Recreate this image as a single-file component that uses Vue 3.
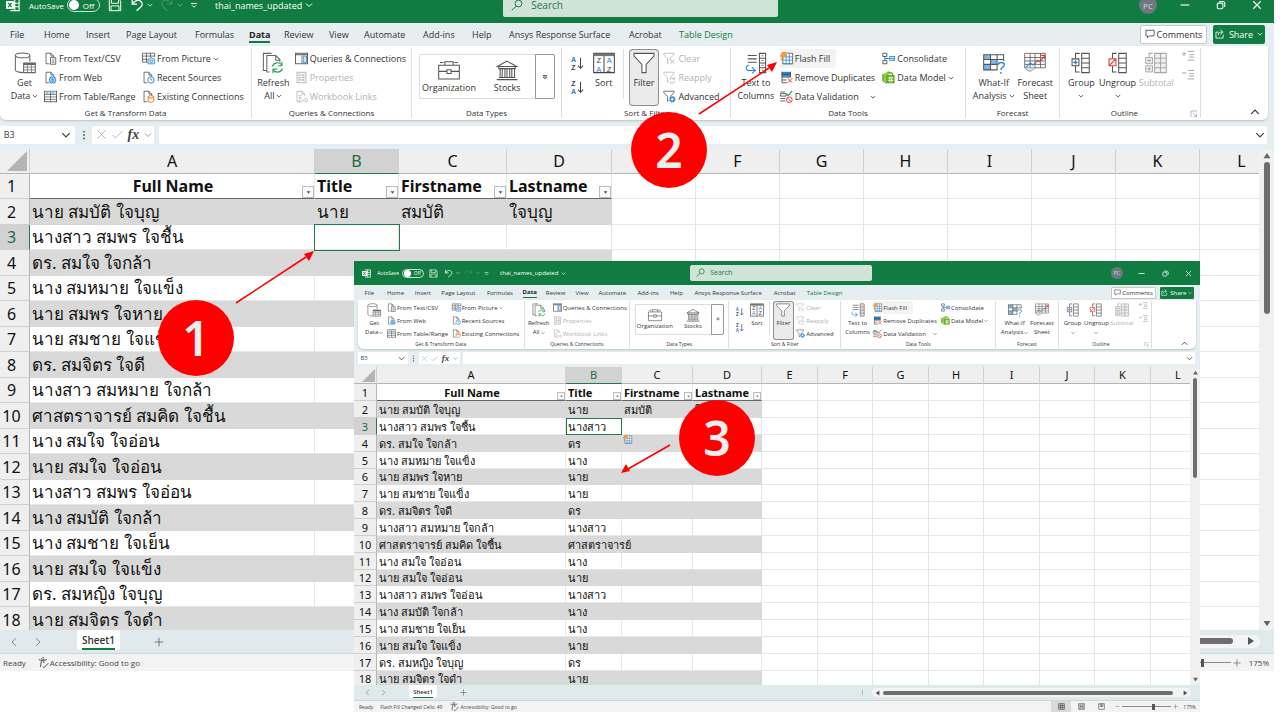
<script setup>
import { h } from 'vue'

const doc = (c = '#555') =>
  `<path d="M6.5 14.5H2.5V1.5h6l3.500 3.500V7M8.500 1.500V5h3.500" fill="none" stroke="${c}"/>`
const funnel = (c) =>
  `<path d="M1 1.500h12.500v1.500L9 8v2M1 1.500V3l4.500 5v6l1.500-1" fill="none" stroke="${c}"/>`

const glyphs = {
  excel: [16, `<path d="M5 1.500h10v13H5M10 1.500v13M5 6h10M5 10h10" fill="none" stroke="#fff" stroke-width="1.300"/><rect y="3.500" width="9" height="9" fill="#fff"/><path d="M2.500 5.500l4 5M6.500 5.500l-4 5" stroke="#107c41" stroke-width="1.500"/>`],
  save: [16, `<path d="M1.500 1.500h11l2 2v11h-13zM4 1.500V6h8V1.500M3.500 14.500V9h9v5.500" fill="none" stroke="#fff" stroke-width="1.100"/>`],
  undo: [16, `<path d="M2.500 1.500V7H8M3 6.500C6 2 11 1.500 13 4.500s1 5-5.500 10" fill="none" stroke="#fff" stroke-width="1.400"/>`],
  redo: [16, `<path d="M13.500 1.500V7H8M13 6.500C10 2 5 1.500 3 4.500s-1 5 5.500 10" fill="none" stroke="#5fa67d" stroke-width="1.400"/>`],
  more: [16, `<path d="M2 5h12" stroke="#fff" stroke-width="1.800"/><path d="M4 8.500l4 4 4-4" fill="none" stroke="#fff" stroke-width="1.800"/>`],
  chevron: [16, `<path d="M2 5l6 6 6-6" fill="none" stroke="currentColor" stroke-width="2"/>`],
  up: [16, `<path d="M2 11l6-6 6 6" fill="none" stroke="currentColor" stroke-width="1.900"/>`],
  left: [16, `<path d="M11 2L5 8l6 6" fill="none" stroke="currentColor" stroke-width="1.500"/>`],
  right: [16, `<path d="M5 2l6 6-6 6" fill="none" stroke="currentColor" stroke-width="1.500"/>`],
  search: [16, `<circle cx="10" cy="6" r="4.500" fill="none" stroke="#22774a" stroke-width="1.300"/><path d="M7 9.500L1 15" stroke="#22774a" stroke-width="1.300"/>`],
  minimise: [16, `<path d="M1 8h14" stroke="#fff" stroke-width="1.800"/>`],
  restore: [16, `<rect x="2" y="5" width="9" height="9" rx="2" fill="none" stroke="#fff" stroke-width="1.700"/><path d="M5 2.500h6a3 3 0 0 1 3 3V11" fill="none" stroke="#fff" stroke-width="1.700"/>`],
  close: [16, `<path d="M2 2l12 12M14 2L2 14" stroke="#fff" stroke-width="1.700"/>`],
  comment: [16, `<path d="M1.500 2h13v9H7l-3 3v-3H1.500z" fill="none" stroke="#333" stroke-width="1.200"/>`],
  share: [16, `<path d="M6 5H1.500v9.500H13V9M5 10c0-4 3-5 6-5M8.500 1.500L13 5 8.500 8.500" fill="none" stroke="#fff" stroke-width="1.300"/>`],
  cross: [16, `<path d="M2 2l12 12M14 2L2 14" stroke="#aaa" stroke-width="1.200"/>`],
  tick: [16, `<path d="M1 9l4 4L15 3" fill="none" stroke="#aaa" stroke-width="1.300"/>`],
  dots: [16, `<circle cx="8" cy="2.500" r="1.500" fill="#555"/><circle cx="8" cy="8" r="1.500" fill="#555"/><circle cx="8" cy="13.500" r="1.500" fill="#555"/>`],
  plus: [16, `<path d="M8 1v14M1 8h14" stroke="#666" stroke-width="1.400"/>`],
  minus: [16, `<path d="M2 8h12" stroke="#666" stroke-width="1.500"/>`],
  access: [16, `<circle cx="7" cy="2.500" r="1.700" fill="none" stroke="#444"/><path d="M1 3.500c4 2 8 2 12 0M5 5.500l-1.500 9M8.500 5.500V9M7 14l2 1.500L15 9" fill="none" stroke="#444" stroke-width="1.300"/>`],
  normal: [16, `<path d="M1.500 1.500h13v13h-13zM1.500 6h13M1.500 10h13M6 1.500v13M10 1.500v13" fill="none" stroke="#444" stroke-width="1.400"/>`],
  page: [16, `<path d="M1.500 1.500h13v13h-13zM4.500 2v12M11.500 2v12M5 5h6M5 8h6M5 11h6" fill="none" stroke="#444" stroke-width="1.300"/>`],
  breaks: [16, `<path d="M1.500 1.500h13v13h-13zM5 1.500V8h6V1.500M8 1.500V8" fill="none" stroke="#444" stroke-width="1.300"/>`],
  csv: [16, doc() + `<rect x="8" y="7" width="6.500" height="8" fill="#fff" stroke="#555"/><path d="M9.500 9.500h3.500M9.500 11.300h3.500M9.500 13h3.500" stroke="#555" stroke-width=".7"/>`],
  web: [16, doc() + `<circle cx="10.500" cy="11" r="4.500" fill="#2b88d8"/><path d="M6.500 9.700h8M6.500 12.300h8M10.500 6.500c-3 3-3 6 0 9c3-3 3-6 0-9" fill="none" stroke="#fff" stroke-width=".7"/>`],
  table: [16, `<rect x=".5" y="1.500" width="15" height="13" fill="#fff" stroke="#444"/><rect x="1" y="2" width="14" height="3" fill="#cde6f7"/><path d="M3 3.500h2M10 3.500h2" stroke="#2b88d8"/><path d="M1 5.500h14M1 8.500h14M1 11.500h14M8 2v12" stroke="#444" stroke-width=".8"/>`],
  picture: [16, `<path d="M7 12.500H.5v-11h15V6M.500 5h15M.500 9H7M5.500 1.500v11M10.500 1.500V6" fill="none" stroke="#555"/><path d="M7.500 8.500h2l1-1.500h2l1 1.500h2v6h-8z" fill="#e6f3fc" stroke="#2b88d8"/><circle cx="11.500" cy="11.300" r="1.700" fill="none" stroke="#2b88d8"/>`],
  recent: [16, doc() + `<circle cx="11" cy="11" r="4" fill="#fff" stroke="#2b88d8" stroke-width="1.200"/><path d="M11 8.500V11h2" fill="none" stroke="#2b88d8"/>`],
  existing: [16, doc() + `<path d="M7.500 8.500v5c0 2 7 2 7 0v-5" fill="#fff" stroke="#e8761a" stroke-width="1.200"/><ellipse cx="11" cy="8.500" rx="3.500" ry="1.500" fill="#fff" stroke="#e8761a" stroke-width="1.200"/>`],
  queries: [16, `<rect x=".5" y="1.500" width="15" height="13" fill="#fff" stroke="#444"/><path d="M1 3h14" stroke="#777" stroke-width="2"/><rect x="10" y="5" width="4" height="8" fill="#cde6f7" stroke="#2b88d8"/><path d="M8.500 4v10" stroke="#777"/>`],
  properties: [16, `<rect x="2.500" y="1.500" width="11" height="13" fill="#f3f3f3" stroke="#b0b0b0"/><path d="M4.500 5h2.500M4.500 8h2.500M4.500 11h2.500M8.500 5h3M8.500 8h3M8.500 11h3" stroke="#b0b0b0" stroke-width="1.500"/>`],
  links: [16, doc('#b5b5b5') + `<path d="M8 10.500H7a2 2 0 0 0 0 4h2M12 10.500h1.500a2 2 0 0 1 0 4H12M8 12.500h5M4.500 7h4M4.500 9h3" fill="none" stroke="#b5b5b5"/>`],
  clear: [16, funnel('#b5b5b5') + `<path d="M9 9.500l5 5M14 9.500l-5 5" stroke="#b5b5b5" stroke-width="1.100"/>`],
  reapply: [16, funnel('#b5b5b5') + `<path d="M8.500 11a3 3 0 0 1 5.500-1V8M14 10h-2.500M14.500 12a3 3 0 0 1-5.500 1.500v2" fill="none" stroke="#b5b5b5"/>`],
  advanced: [16, funnel('#555') + `<circle cx="11.500" cy="11.500" r="3" fill="#fff" stroke="#2b88d8" stroke-width="2" stroke-dasharray="1.600 .700"/><circle cx="11.500" cy="11.500" r="2.200" fill="none" stroke="#2b88d8" stroke-width="1.300"/>`],
  flash: [16, `<path d="M3.500 8v6.500h12v-13H8" fill="#fff" stroke="#555"/><path d="M7.500 3v11.500M11.500 2v12.500M7 6h8M4 10h11" stroke="#2b88d8"/><path d="M3.500 14.500h12" stroke="#2b88d8"/><path d="M3 .5h5L5.500 4H8L1.500 10 3 5.500H.5z" fill="#f7a23b" stroke="#d9730d" stroke-width=".7"/>`],
  duplicates: [16, `<rect x="2" y="1" width="11" height="6" fill="#2b88d8"/><path d="M2.500 1v13.500h6M13 1v7M2.500 7.500H13M2.500 11H8M3 4h10" fill="none" stroke="#444"/><path d="M9.500 9l5.500 5.500M15 9l-5.500 5.500" stroke="#e03c3c" stroke-width="1.200"/>`],
  validation: [16, `<path d="M.5 2.500h6M.5 13.500h6M.5 7.500h7v-3H.500zM.500 10.500h6" fill="none" stroke="#444"/><path d="M8 4.500l2 2.500 5-6" fill="none" stroke="#1f9d55" stroke-width="1.300"/><circle cx="11.500" cy="12" r="3.500" fill="#fff" stroke="#e03c3c" stroke-width="1.200"/><path d="M9.500 10l4 4" stroke="#e03c3c"/>`],
  consolidate: [16, `<path d="M1 1.500h5v4H1zM1 10.500h5v4H1z" fill="none" stroke="#444"/><path d="M3.500 5.500v5M3.500 8H9" stroke="#2b88d8" stroke-width="1.300"/><rect x="9.500" y="5.500" width="6" height="5" fill="#cde6f7" stroke="#2b88d8"/><path d="M10 8h5" stroke="#2b88d8"/>`],
  model: [16, `<path d="M1 4l6-3 5 1.500L7 5v9l-6-3z" fill="#8ccf3c"/><path d="M7 1l6 2v5M1 4v8l5 3" fill="none" stroke="#5aa716" stroke-width="1.300"/><rect x="5.500" y="5" width="10" height="10" rx="1" fill="#5aa716"/><path d="M7 8.500h7M7 11.500h7M9.500 6.500V14M12 6.500V14" stroke="#fff"/>`],
  getdata: [32, `<path d="M2 5v21c0 2 5 4 11 4M23 5v9" fill="none" stroke="#666" stroke-width="1.500"/><ellipse cx="12.500" cy="5" rx="10.500" ry="3.500" fill="#fff" stroke="#666" stroke-width="1.500"/><path d="M14 16h17v14H14z" fill="#fff" stroke="#666" stroke-width="1.500"/><path d="M14 17.500h17" stroke="#666" stroke-width="3"/><path d="M14 22h17M14 26h17M19.500 17v13M25.500 17v13" stroke="#777" stroke-width="1.200"/>`],
  refresh: [32, `<path d="M7 27H2V2h12M11 29H7V5h13l6 6v4M20 5v7h6" fill="none" stroke="#666" stroke-width="1.500"/><path d="M15 21a8 8 0 0 1 14-2M29 14v6h-6M30 24a8 8 0 0 1-14 2M16 31v-6h6" fill="none" stroke="#2ea35b" stroke-width="1.700"/>`],
  organization: [32, `<path d="M1 9h30v20H1zM10 9V4h12v5M1 18h12M19 18h12M13 15.500h6V21h-6zM3 5h5M24 5h5" fill="none" stroke="#555" stroke-width="1.500"/>`],
  stocks: [32, `<path d="M16 3L2 11h28zM4 11v3h24v-3M4 27h24M1 30h30M6 14v12M9 14v12M13 14v12M16 14v12M20 14v12M23 14v12M27 14v12" fill="none" stroke="#555" stroke-width="1.500"/>`],
  sort: [32, `<path d="M1 2h30v28H1z" fill="#fff" stroke="#444" stroke-width="1.500"/><path d="M1 4h30" stroke="#777" stroke-width="4"/><path d="M16 6v24" stroke="#444" stroke-width="1.500"/><g font-size="11" text-anchor="middle" fill="#333"><text x="8.500" y="16.500">Z</text><text x="8.500" y="28.500" fill="#2b7cd3">A</text><text x="23.500" y="16.500" fill="#2b7cd3">A</text><text x="23.500" y="28.500">Z</text></g>`],
  az: [16, `<g font-size="8" font-weight="600" text-anchor="middle"><text x="4" y="7" fill="#2b7cd3">A</text><text x="4" y="15.500" fill="#444">Z</text></g><path d="M12 2v12M9 11l3 3 3-3" fill="none" stroke="#444" stroke-width="1.200"/>`],
  za: [16, `<g font-size="8" font-weight="600" text-anchor="middle"><text x="4" y="7" fill="#444">Z</text><text x="4" y="15.500" fill="#2b7cd3">A</text></g><path d="M12 2v12M9 11l3 3 3-3" fill="none" stroke="#444" stroke-width="1.200"/>`],
  filter: [32, `<path d="M1.500 2h29v4L19 18v12h-6V18L1.500 6z" fill="#fff" stroke="#555" stroke-width="1.500"/>`],
  textcols: [32, `<path d="M4 5h13M4 10h13M4 15h13" stroke="#555" stroke-width="1.500"/><path d="M21 2h9v28h-9zM21 9h9M21 16h9M21 23h9" fill="none" stroke="#555" stroke-width="1.500"/><path d="M24 5.500h3M24 12.500h3M24 19.500h3M24 26.500h3" stroke="#777" stroke-width="1.300"/><path d="M5 19c-5 3-4 9 3 8h6M10 22l5 5-5 4" fill="none" stroke="#2b88d8" stroke-width="1.600"/>`],
  whatif: [32, `<path d="M1 4h29v22H1z" fill="#fff"/><path d="M1 4h10v7H1zM11 11h9v7h-9zM1 18h10v8H1z" fill="#79b8ea"/><path d="M21 26H1V4h29v9M1 11h29M1 18h20M11 4v22M20.500 4v22" fill="none" stroke="#555" stroke-width="1.500"/><path d="M22 19c0-5 9-5 9 0 0 3-5 3-5 7M26 29v2.500" fill="none" stroke="#2b88d8" stroke-width="2"/>`],
  forecast: [32, `<path d="M1 2h30v21H1zM1 8h30M1 13h30M1 18h30M9 2v21M16 2v21M24 2v21" fill="none" stroke="#666" stroke-width="1.300"/><path d="M1 23c7 8 10 5 15 0" fill="#ddd" stroke="#777"/><path d="M3 22l6-6 4 3 4-3" fill="none" stroke="#2b88d8" stroke-width="1.800"/><path d="M17 15l3-3 3 2 7-8M25 5h5v5" fill="none" stroke="#d83b3b" stroke-width="1.700"/>`],
  group: [32, `<path d="M17 2h11v28H17zM17 9h11M17 16h11M17 23h11M14 2H8v7M8 20v9h6" fill="none" stroke="#555" stroke-width="1.500"/><path d="M3 10h10v10H3z" fill="#fff" stroke="#555" stroke-width="1.500"/><path d="M8 12v6M5 15h6" stroke="#2b7cd3" stroke-width="2"/>`],
  ungroup: [32, `<path d="M17 2h11v28H17zM17 9h11M17 16h11M17 23h11M14 2H8v7M8 20v9h6" fill="none" stroke="#555" stroke-width="1.500"/><path d="M3 10h10v10H3zM3 20L13 10" fill="#fff" stroke="#e04848" stroke-width="1.700"/>`],
  subtotal: [32, `<path d="M14 2h17v28H14z" fill="#f0f0f0"/><path d="M14 2h17v28H14zM14 9h17M14 16h17M14 23h17M22.500 2v28M11 2H6v5" fill="none" stroke="#a8a8a8" stroke-width="1.500"/><path d="M1 8h10v9H1zM1 20h10v9H1zM3 12.500h6M6 10v5M3 24.500h6M6 22v5" fill="#eee" stroke="#a8a8a8" stroke-width="1.400"/>`],
  show: [16, `<path d="M0 6h5M2.500 3.500v5M7 3h8M9 7h6M9 10h6M7 13.500h8" stroke="#aaa" stroke-width="1.200"/>`],
  hide: [16, `<path d="M0 6h5M7 3h8M9 7h6M9 10h6M7 13.500h8" stroke="#aaa" stroke-width="1.200"/>`],
  launcher: [16, `<path d="M2 14V2h12M6 6l7 7M13 7v6.500H6.500" fill="none" stroke="#999" stroke-width="1.300"/>`],
}

const Icon = ({ name }) =>
  h('svg', {
    viewBox: `0 0 ${glyphs[name][0]} ${glyphs[name][0]}`,
    'aria-hidden': 'true',
    innerHTML: glyphs[name][1],
  })
Icon.props = ['name']

const tabs = ['File', 'Home', 'Insert', 'Page Layout', 'Formulas', 'Data', 'Review', 'View', 'Automate',
  'Add-ins', 'Help', 'Ansys Response Surface', 'Acrobat', 'Table Design']

const gap = { kind: 'gap' }
const large = (icon, lines, extra = {}) => ({ kind: 'large', icon, lines, ...extra })
const list = (...items) => ({ kind: 'list', items: items.map(([icon, text, flag]) => ({ icon, text, flag })) })

const groups = [
  { id: 'get', label: 'Get & Transform Data', blocks: [gap, large('getdata', ['Get', 'Data'], { caret: true }),
    list(['csv', 'From Text/CSV'], ['web', 'From Web'], ['table', 'From Table/Range']),
    list(['picture', 'From Picture', 'drop'], ['recent', 'Recent Sources'], ['existing', 'Existing Connections'])] },
  { id: 'queries', label: 'Queries & Connections', blocks: [large('refresh', ['Refresh', 'All'], { caret: true }),
    list(['queries', 'Queries & Connections'], ['properties', 'Properties', 'dim'], ['links', 'Workbook Links', 'dim'])] },
  { id: 'types', label: 'Data Types', blocks: [gap, { kind: 'gallery' }, gap] },
  { id: 'sort', label: 'Sort & Filter', blocks: [gap, { kind: 'order' }, large('sort', ['Sort']), { kind: 'rule' },
    large('filter', ['Filter'], { on: true }), gap,
    list(['clear', 'Clear', 'dim'], ['reapply', 'Reapply', 'dim'], ['advanced', 'Advanced'])] },
  { id: 'tools', label: 'Data Tools', blocks: [gap, large('textcols', ['Text to', 'Columns']), gap,
    list(['flash', 'Flash Fill', 'hover'], ['duplicates', 'Remove Duplicates'], ['validation', 'Data Validation', 'far']),
    list(['consolidate', 'Consolidate'], ['model', 'Data Model', 'drop'])] },
  { id: 'forecasts', label: 'Forecast', blocks: [gap, large('whatif', ['What-If', 'Analysis'], { caret: true }),
    large('forecast', ['Forecast', 'Sheet']), gap] },
  { id: 'outline', label: 'Outline', launcher: true, blocks: [gap, large('group', ['Group', ''], { caret: true }),
    large('ungroup', ['Ungroup', ''], { caret: true }), large('subtotal', ['Subtotal'], { dim: true }), { kind: 'levels' }] },
]

const letters = 'ABCDEFGHIJKL'.split('')
const heads = ['Full Name', 'Title', 'Firstname', 'Lastname']
const names = [
  'นาย สมบัติ ใจบุญ', 'นางสาว สมพร ใจชื้น', 'ดร. สมใจ ใจกล้า', 'นาง สมหมาย ใจแข็ง', 'นาย สมพร ใจหาย',
  'นาย สมชาย ใจแข็ง', 'ดร. สมจิตร ใจดี', 'นางสาว สมหมาย ใจกล้า', 'ศาสตราจารย์ สมคิด ใจชื้น', 'นาง สมใจ ใจอ่อน',
  'นาย สมใจ ใจอ่อน', 'นางสาว สมพร ใจอ่อน', 'นาง สมบัติ ใจกล้า', 'นาง สมชาย ใจเย็น', 'นาย สมใจ ใจแข็ง',
  'ดร. สมหญิง ใจบุญ', 'นาย สมจิตร ใจดำ',
]
const rowsFor = (filled) =>
  names.map((name, i) => {
    const [title, first, last] = name.split(' ')
    if (i === 0) return [name, title, first, last]
    return [name, filled ? title.replace('.', '') : '', '', '']
  })

const windows = [
  { id: 'main', rows: rowsFor(false), message: '' },
  { id: 'inset', rows: rowsFor(true), message: 'Flash Fill Changed Cells: 49' },
]
</script>

<template>
  <div class="page">
    <section v-for="w in windows" :key="w.id" class="window" :class="w.id" aria-label="thai_names_updated">
      <header class="titlebar">
        <Icon name="excel" class="mid-icon logo" />
        <span class="auto">AutoSave</span>
        <button class="toggle"><i></i>Off</button>
        <button aria-label="Save"><Icon name="save" class="mid-icon" /></button>
        <button class="pair" aria-label="Undo"><Icon name="undo" class="mid-icon" /><Icon name="chevron" class="caret" /></button>
        <button class="pair faded" aria-label="Redo"><Icon name="redo" class="mid-icon" /><Icon name="chevron" class="caret" /></button>
        <button aria-label="Customize toolbar"><Icon name="more" class="chev" /></button>
        <button class="pair file">thai_names_updated <Icon name="chevron" class="chev" /></button>
        <label class="search"><Icon name="search" class="mid-icon" /><input type="text" placeholder="Search" aria-label="Search" /></label>
        <span class="avatar">PC</span>
        <button aria-label="Minimize"><Icon name="minimise" class="sys" /></button>
        <button aria-label="Restore"><Icon name="restore" class="sys" /></button>
        <button aria-label="Close"><Icon name="close" class="sys" /></button>
      </header>

      <nav class="tabs">
        <button v-for="t in tabs" :key="t" :class="{ active: t === 'Data', design: t === 'Table Design' }"><span>{{ t }}</span></button>
        <button class="comments"><Icon name="comment" class="small-icon" />Comments</button>
        <button class="share"><Icon name="share" class="small-icon" />Share<Icon name="chevron" class="caret" /></button>
      </nav>

      <div class="ribbon">
        <div v-for="g in groups" :key="g.id" class="group" :class="g.id">
          <div class="tools-row">
            <template v-for="(b, i) in g.blocks" :key="i">
              <span v-if="b.kind === 'gap'"></span>
              <span v-else-if="b.kind === 'rule'" class="rule"></span>
              <button v-else-if="b.kind === 'large'" class="large" :class="{ on: b.on, dim: b.dim }">
                <Icon :name="b.icon" class="large-icon" />
                <span v-for="(l, n) in b.lines" :key="n" class="line">{{ l }}<Icon v-if="b.caret && n === 1" name="chevron" class="caret" /></span>
              </button>
              <div v-else-if="b.kind === 'list'" class="list">
                <button v-for="it in b.items" :key="it.text" :class="it.flag">
                  <Icon :name="it.icon" class="item-icon" />{{ it.text }}<Icon v-if="it.flag === 'drop' || it.flag === 'far'" name="chevron" class="caret" />
                </button>
              </div>
              <div v-else-if="b.kind === 'gallery'" class="gallery">
                <button><Icon name="organization" class="large-icon" />Organization</button>
                <button><Icon name="stocks" class="large-icon" />Stocks</button>
                <button class="expand" aria-label="More data types"><svg viewBox="0 0 16 16" class="caret"><path d="M2 4h12M3 8h10l-5 5z" fill="none" stroke="#333" stroke-width="2" /></svg></button>
              </div>
              <div v-else-if="b.kind === 'order'" class="order">
                <button aria-label="Sort A to Z"><Icon name="az" class="mid-icon" /></button>
                <button aria-label="Sort Z to A"><Icon name="za" class="mid-icon" /></button>
              </div>
              <div v-else class="levels">
                <button aria-label="Show detail"><Icon name="show" class="item-icon" /></button>
                <button aria-label="Hide detail"><Icon name="hide" class="item-icon" /></button>
              </div>
            </template>
          </div>
          <div class="caption">{{ g.label }}<button v-if="g.launcher" class="launcher" aria-label="Outline settings"><Icon name="launcher" class="chev" /></button></div>
        </div>
        <button class="collapse" aria-label="Collapse ribbon"><Icon name="up" class="small-icon" /></button>
      </div>

      <div class="formula">
        <div class="box namebox"><input type="text" value="B3" aria-label="Name box" /><Icon name="chevron" class="small-icon" /></div>
        <Icon name="dots" class="small-icon center" />
        <div class="box fx">
          <button aria-label="Cancel"><Icon name="cross" class="mid-icon" /></button>
          <button aria-label="Enter"><Icon name="tick" class="mid-icon" /></button>
          <button class="fn" aria-label="Insert function">fx</button>
          <Icon name="chevron" class="chev soft" />
        </div>
        <div class="box entry"><input type="text" aria-label="Formula bar" /><Icon name="chevron" class="small-icon" /></div>
      </div>

      <div class="sheet">
        <div class="cells">
          <table>
            <colgroup><col v-for="n in 13" :key="n" /></colgroup>
            <thead>
              <tr>
                <th class="corner"><svg viewBox="0 0 20 20" aria-hidden="true"><path d="M20 0v20H0z" fill="#b4b4b4" /></svg></th>
                <th v-for="l in letters" :key="l" scope="col" :class="{ picked: l === 'B' }">{{ l }}</th>
              </tr>
            </thead>
            <tbody>
              <tr class="first">
                <th scope="row">1</th>
                <td v-for="t in heads" :key="t" class="head">{{ t }}<button :aria-label="'Filter ' + t"><svg viewBox="0 0 8 8"><path d="M1 2h6L4 6z" fill="#555" /></svg></button></td>
                <td v-for="n in 8" :key="n"></td>
              </tr>
              <tr v-for="(r, i) in w.rows" :key="i" :class="{ band: i % 2 === 0 }">
                <th scope="row" :class="{ picked: i === 1 }">{{ i + 2 }}</th>
                <td v-for="(c, n) in r" :key="n" class="data" :class="{ selected: i === 1 && n === 1 }">{{ c }}</td>
                <td v-for="n in 8" :key="'e' + n"></td>
              </tr>
            </tbody>
          </table>
          <Icon v-if="w.id === 'inset'" name="flash" class="fill-tag" />
        </div>
        <div class="vscroll">
          <svg viewBox="0 0 8 8"><path d="M4 1l4 6H0z" fill="#666" /></svg>
          <i></i>
          <svg viewBox="0 0 8 8"><path d="M4 7L0 1h8z" fill="#666" /></svg>
        </div>
      </div>

      <div class="sheetbar">
        <div class="arrows"><button aria-label="Previous sheet"><Icon name="left" class="small-icon" /></button><button aria-label="Next sheet"><Icon name="right" class="small-icon" /></button></div>
        <button class="sheet-tab"><span>Sheet1</span></button>
        <button class="add" aria-label="New sheet"><Icon name="plus" class="small-icon" /></button>
        <Icon name="dots" class="chev grip" />
        <div class="hscroll">
          <svg viewBox="0 0 8 8"><path d="M1 4l6-4v8z" fill="#555" /></svg>
          <i></i>
          <svg viewBox="0 0 8 8"><path d="M7 4L1 8V0z" fill="#555" /></svg>
        </div>
      </div>

      <footer class="status">
        <span>Ready</span>
        <span v-if="w.message" class="message">{{ w.message }}</span>
        <span class="access"><Icon name="access" class="item-icon" />Accessibility: Good to go</span>
        <span class="views">
          <button class="current" aria-label="Normal"><Icon name="normal" class="item-icon" /></button>
          <button aria-label="Page Layout"><Icon name="page" class="item-icon" /></button>
          <button aria-label="Page Break Preview"><Icon name="breaks" class="item-icon" /></button>
        </span>
        <Icon name="minus" class="chev" />
        <input type="range" min="0" max="100" value="64" aria-label="Zoom" />
        <Icon name="plus" class="chev" />
        <span class="percent">175%</span>
      </footer>
    </section>

    <svg class="arrow a1" viewBox="0 0 80 54"><path d="M1 53L71 7" stroke="#f00" stroke-width="1.500" /><path d="M79 1l-5 10-5-7z" fill="#f00" /></svg>
    <svg class="arrow a2" viewBox="0 0 80 54"><path d="M1 53L71 7" stroke="#f00" stroke-width="1.500" /><path d="M79 1l-5 10-5-7z" fill="#f00" /></svg>
    <svg class="arrow a3" viewBox="0 0 50 30"><path d="M49 1L7 25" stroke="#f00" stroke-width="1.500" /><path d="M0 29l5-9 4 7z" fill="#f00" /></svg>
    <div class="badge b1">1</div>
    <div class="badge b2">2</div>
    <div class="badge b3">3</div>
  </div>
</template>

<style>
body { margin: 0; background: #fff; overflow: hidden; }
</style>

<style scoped>
* { box-sizing: border-box; }
.page { position: relative; height: 100vh; overflow: hidden; font-family: "Open Sans", "Noto Sans", sans-serif; color: #333; }
button, input { font: inherit; color: inherit; background: none; border: 0; padding: 0; margin: 0; min-width: 0; }
svg { display: block; flex: none; overflow: visible; font-family: "Liberation Sans", sans-serif; }

.window {
  --ui: 9px; --tab: 9px; --tiny: 8px; --ico: 13px; --mid: 14px; --small: 10px; --big: 22px; --caret: 6px; --chev: 8px; --gap: 2px;
  --edge: 0px; --title: 36px; --tabs: 23px; --row: 19px; --line: 13px; --caption: 14px; --pad: 3px;
  --bar: 29px; --box: 18px; --cell: 16px; --thai: 17px; --sheetbar: 24px; --status: 17px; --round: 4px;
  display: flex; flex-direction: column; background: #e6eef1; overflow: hidden; font-size: var(--ui); white-space: nowrap;
}
.inset {
  --ui: 6px; --tab: 6px; --tiny: 5px; --ico: 9px; --mid: 9px; --small: 7px; --big: 14px; --caret: 4px; --chev: 5px; --gap: 1px;
  --edge: 4px; --title: 24px; --tabs: 15px; --row: 13px; --line: 9px; --caption: 9px; --pad: 2px;
  --bar: 18px; --box: 12px; --cell: 11px; --thai: 11px; --sheetbar: 16px; --status: 11px; --round: 3px;
}
.main { height: 671px; margin-right: 6px; }
.main .titlebar { margin-top: -13px; }
.inset { position: absolute; left: 354px; right: 80px; top: 261px; height: 451px; }
.window > * { flex: none; }

.mid-icon { width: var(--mid); height: var(--mid); }
.small-icon { width: var(--small); height: var(--small); }
.item-icon { width: var(--ico); height: var(--ico); }
.large-icon { width: var(--big); height: var(--big); }
.caret { width: var(--caret); height: var(--caret); }
.chev { width: var(--chev); height: var(--chev); }
.soft { color: #999; }

.titlebar {
  display: grid; align-items: center; height: var(--title); padding-left: var(--edge); background: #107c41; color: #fff; font-size: var(--ui);
  grid-template-columns: 6fr 23fr 38fr 41fr 22fr 30fr 30fr 25fr 288fr 275fr 361fr 41fr 36fr 36fr 22fr;
}
.titlebar > * { min-width: 0; }
.titlebar button { display: flex; align-items: center; }
.logo { grid-column: 2; }
.auto { font-size: var(--tiny); }
.titlebar .toggle { width: 80%; height: var(--mid); border: 1px solid #cfe3d6; border-radius: 8px; gap: 12%; font-size: var(--tiny); }
.toggle i { width: var(--small); height: var(--small); margin-left: 1px; border-radius: 50%; background: #fff; }
.pair { gap: 3px; }
.faded { opacity: .5; }
.search { display: flex; align-items: center; gap: 3%; height: 66%; padding-left: 3%; border-radius: 2px; background: #cfe3d6; color: #22774a; }
.search input { flex: 1; font-size: var(--cell); }
.main .search input { font-size: 10px; }
.inset .search input { font-size: 7px; }
.search input::placeholder { color: #22774a; opacity: 1; }
.main .search .mid-icon { width: 12px; height: 12px; }
.avatar { grid-column: 12; display: grid; place-items: center; width: 18px; height: 18px; border-radius: 50%; background: #6f7780; color: #d8dcdf; font-size: var(--tiny); }
.inset .avatar { width: 12px; height: 12px; }
.sys { width: var(--small); height: var(--small); }

.tabs {
  display: grid; align-items: center; height: var(--tabs); padding-left: var(--edge); font-size: var(--tab);
  grid-template-columns: 10fr 34fr 42fr 40fr 69fr 54fr 35fr 45fr 35fr 59fr 49fr 37fr 120fr 50fr 461fr 67fr 6fr 52fr 9fr;
}
.tabs button { display: flex; min-width: 0; align-items: center; }
.tabs button:first-child { grid-column: 2; }
.tabs .active { font-weight: 700; color: #222; }
.active span { border: 0 solid transparent; border-width: 2px 0; border-bottom-color: #107c41; line-height: 13px; }
.inset .active span { border-width: 1px 0; line-height: 9px; }
.design { color: #107c41; }
.tabs .comments, .tabs .share { justify-content: center; gap: var(--gap); height: 80%; border-radius: var(--gap); font-size: var(--ui); }
.comments { background: #fff; border: 1px solid #c3cacc; }
.tabs .share { grid-column: 18; background: #107c41; color: #fff; gap: 4px; }
.inset .tabs .share { gap: 2px; }

.ribbon {
  display: grid; margin-left: var(--edge); margin-right: 6px; background: #fff; border-radius: 0 0 6px 6px; box-shadow: 0 1px 2px #b9c2c5;
  grid-template-columns: 252fr 160fr 150fr 169fr 235fr 94fr 141fr 67fr;
}
.inset .ribbon { margin-right: 4px; }
.group { min-width: 0; padding-top: var(--pad); border-right: 1px solid #dedede; border-image: linear-gradient(#fff 4%, #dedede 4%, #dedede 96%, #fff 96%) 1; border-width: 0 1px 0 0; }
.inset .group { padding-top: 1px; }
.tools-row { display: grid; height: calc(var(--row) * 3); }
.tools-row > * { min-width: 0; }
.get .tools-row { grid-template-columns: 5fr 39fr 98fr 109fr; }
.queries .tools-row { grid-template-columns: 43fr 117fr; }
.types .tools-row { grid-template-columns: 7fr 137fr 6fr; }
.sort .tools-row { grid-template-columns: 3fr 25fr 28fr 11fr 31fr 4fr 67fr; }
.tools .tools-row { grid-template-columns: 3fr 44fr 2fr 103fr 83fr; }
.forecasts .tools-row { grid-template-columns: 7fr 42fr 42fr 3fr; }
.outline .tools-row { grid-template-columns: 3fr 37fr 36fr 42fr 23fr; }
.caption { position: relative; height: var(--caption); line-height: var(--caption); text-align: center; font-size: var(--tiny); }
.outline .caption { padding-right: 8%; }
.launcher { position: absolute; right: 2px; top: 25%; }
.large { display: flex; flex-direction: column; align-items: center; padding-top: var(--pad); }
.large .large-icon { margin-bottom: 2px; }
.line { display: flex; align-items: center; gap: var(--gap); height: var(--line); line-height: var(--line); }
.on { background: #ebebeb; border-radius: var(--round); box-shadow: inset 0 0 0 1px #8f8f8f; }
.dim { color: #b3b3b3; }
.rule { justify-self: center; width: 1px; height: 88%; background: #dedede; }
.list { display: grid; grid-auto-rows: var(--row); }
.list button { display: flex; align-items: center; justify-self: start; gap: var(--gap); }
.list .far .caret { margin-left: 9px; }
.inset .list .far .caret { margin-left: 6px; }
.list .hover { background: #f3f3f3; border-radius: 3px; padding-right: 6px; }
.gallery { display: grid; grid-template-columns: 59fr 59fr 18fr; height: 79%; align-self: start; border: 1px solid #dcdcdc; border-radius: var(--gap); margin-top: 5px; }
.inset .gallery { margin-top: 3px; }
.gallery button { display: flex; min-width: 0; flex-direction: column; align-items: center; justify-content: center; }
.gallery .expand { border: 1px solid #999; border-radius: 0 2px 2px 0; margin: -1px; }
.order, .levels { display: grid; height: 88%; justify-items: center; align-items: center; }
.order { padding-top: 2px; }
.levels { align-items: start; height: 68%; }
.collapse { justify-self: end; align-self: end; margin: 0 8px var(--pad) 0; }

.formula { display: grid; align-items: center; height: var(--bar); padding-left: var(--edge); grid-template-columns: 75fr 17fr 62fr 5fr 1108fr 7fr; }
.formula > * { min-width: 0; }
.box { display: flex; align-items: center; height: var(--box); background: #fff; border-radius: var(--gap); padding: 0 5%; color: #444; font-size: var(--ui); }
.box input { flex: 1; width: 0; }
.center { justify-self: center; }
.fx { justify-content: space-between; padding: 0 2px; }
.main .fx { padding: 0 2px 0 4px; }
.main .fx .mid-icon { width: 11px; height: 11px; }
.inset .fx .mid-icon { width: 7px; height: 7px; }
.fn { font-family: "Liberation Serif", serif; font-style: italic; font-weight: 700; font-size: var(--mid); line-height: 1; }
.entry { grid-column: 5; padding: 0 2px 0 4px; }

.window > .sheet { flex: 1; min-height: 0; display: flex; }
.cells { position: relative; flex: 1; min-width: 0; overflow: hidden; background: #fff; }
table { table-layout: fixed; width: 1px; border-collapse: separate; border-spacing: 0; font-family: "Noto Sans", "Open Sans", sans-serif; font-size: var(--cell); color: #111; }
.main col { width: 84px; }
.main col:nth-child(1) { width: 30px; }
.main col:nth-child(2) { width: 285px; }
.main col:nth-child(4) { width: 108px; }
.main col:nth-child(5) { width: 105px; }
.inset col { width: 56px; }
.inset col:nth-child(odd) { width: 55px; }
.inset col:nth-child(1) { width: 23px; }
.inset col:nth-child(2) { width: 189px; }
.inset col:nth-child(3) { width: 56px; }
.inset col:nth-child(4) { width: 71px; }
.inset col:nth-child(5) { width: 69px; }
tr { height: 26px; }
tr:nth-child(odd) { height: 25px; }
th, td { height: inherit; padding: 0; line-height: 24px; border: 0 solid #e6e6e6; border-width: 0 1px 1px 0; }
.inset tr { height: 17px; }
.inset tbody tr:nth-child(6n) { height: 16px; }
.inset th, .inset td { line-height: 15px; }
.inset thead th { line-height: 16px; }
th { font-weight: 400; background: #efefef; border-color: #d0d0d0; }
thead th { border-bottom-color: #b5b5b5; }
tbody th { border-right-color: #b5b5b5; text-align: left; padding-left: 2px; }
.main tbody th { text-align: center; padding: 0 6px 0 0; }
.inset tbody th { text-align: center; padding: 0; }
.corner svg { width: 20px; height: 20px; margin-left: auto; margin-right: 2px; }
.inset .corner svg { width: 13px; height: 13px; margin-right: 1px; }
.picked { background: #d2d2d2; color: #1d6b43; border-color: #1f7a4c; border-right-color: #1f7a4c; }
thead .picked { border-right-color: #d2d2d2; border-bottom-color: #1f7a4c; }
tbody .picked { border-bottom-color: #d2d2d2; }
.head { position: relative; font-weight: 700; padding-left: 2px; border-bottom-color: #666; }
.head:nth-child(2) { text-align: center; }
.head button { position: absolute; right: 0; bottom: 0; width: 12px; height: 12px; border: 1px solid #b8bcc4; background: #fafafa; }
.inset .head button { width: 8px; height: 8px; }
.head svg { width: 50%; margin: auto; }
.data { padding-left: 2px; font-size: var(--thai); }
.band .data { background: #d9d9d9; border-color: #d9d9d9; }
.selected { outline: 1px solid #1f7a4c; outline-offset: 0; }
.inset .selected { outline-offset: -1px; }
.fill-tag { position: absolute; left: 269px; top: 68px; width: 9px; height: 9px; }
.vscroll { display: flex; flex-direction: column; align-items: center; width: 15px; padding: 3px 0; background: #f1f1f1; border-radius: 6px; }
.vscroll svg { width: 8px; height: 7px; }
.vscroll i { width: 6px; height: 32%; margin: 3px 0 auto; border-radius: 3px; background: #6e6e6e; }
.inset .vscroll { width: 10px; }
.inset .vscroll svg { width: 5px; height: 5px; }
.inset .vscroll i { width: 4px; }

.sheetbar {
  display: grid; align-items: center; height: var(--sheetbar); padding-left: var(--edge); background: #e0eaec; border-bottom: 1px solid #cdd8da;
  grid-template-columns: 77fr 43fr 24fr 30fr 582fr 16fr 6fr 482fr 14fr;
}
.sheetbar > * { min-width: 0; }
.arrows { display: flex; justify-content: space-between; padding: 0 44% 0 12%; color: #777; }
.sheet-tab { align-self: start; height: 88%; background: #fff; border-radius: 0 0 3px 3px; font-weight: 600; font-size: var(--tab); line-height: 1; }
.main .sheet-tab { font-size: 10px; }
.sheet-tab span { border-bottom: 2px solid #107c41; padding-bottom: 1px; }
.inset .sheet-tab span { border-width: 1px; }
.add { grid-column: 4; justify-self: center; }
.grip { grid-column: 6; justify-self: center; }
.hscroll { grid-column: 8; display: flex; align-items: center; height: 55%; padding: 0 1%; border-radius: 6px; background: #f3f5f5; }
.hscroll svg { width: 8px; height: 8px; }
.hscroll i { flex: 1; height: 6px; margin: 0 3% 0 1%; border-radius: 3px; background: #6e6e6e; }
.inset .hscroll svg { width: 5px; height: 6px; }
.inset .hscroll i { height: 4px; }

.status { display: flex; align-items: center; height: var(--status); padding: 0 5px 0 3px; background: #f3f3f3; font-size: var(--tiny); color: #444; }
.access { display: flex; align-items: center; gap: 1px; margin: 0 auto 0 12px; }
.main .access .item-icon { width: 11px; height: 11px; }
.message { margin-left: 7px; }
.inset .access { margin-left: 8px; }
.inset .status { padding: 0 4px 0 5px; }
.views { display: flex; align-self: stretch; margin-right: 4px; }
.views button { width: 30px; display: grid; place-items: center; }
.inset .views button { width: 20px; }
.inset .views .item-icon { width: 7px; height: 7px; }
.current { background: #dadada; }
input[type="range"] { appearance: none; width: 76px; height: 9px; margin: 0 2px; background: linear-gradient(#888, #888) center / 100% 1px no-repeat; }
.inset input[type="range"] { width: 49px; height: 6px; margin: 0 2px; }
input[type="range"]::-webkit-slider-thumb { appearance: none; width: 3px; height: 8px; background: #555; }
.inset input[type="range"]::-webkit-slider-thumb { height: 6px; }
.percent { margin-left: 8px; }
.inset .percent { margin-left: 5px; }

.arrow { position: absolute; fill: none; }
.a1 { left: 235px; top: 250px; width: 80px; height: 54px; }
.a2 { left: 698px; top: 61px; width: 80px; height: 54px; }
.a3 { left: 621px; top: 444px; width: 50px; height: 30px; }
.badge { position: absolute; display: grid; place-items: center; width: 76px; height: 76px; border-radius: 50%; background: #f00; color: #eee; font: 600 48px/1 "Noto Sans", "Open Sans", sans-serif; }
.b1 { left: 158px; top: 300px; }
.b2 { left: 631px; top: 112px; }
.b3 { left: 679px; top: 400px; }
</style>
